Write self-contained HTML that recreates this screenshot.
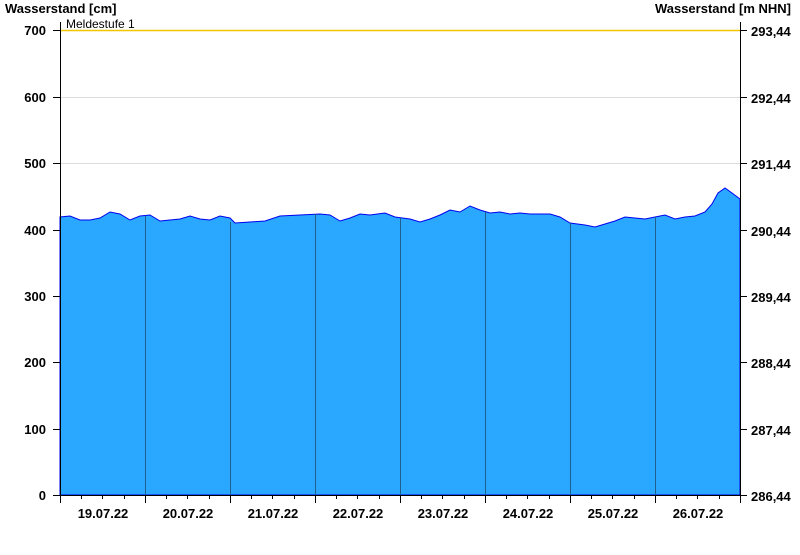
<!DOCTYPE html>
<html><head><meta charset="utf-8"><style>
body{margin:0;background:#fff;width:800px;height:550px;overflow:hidden}
svg text{font-family:"Liberation Sans",Arial,sans-serif;font-weight:bold;font-size:13px;fill:#000}
</style></head><body>
<svg width="800" height="550" xmlns="http://www.w3.org/2000/svg">
<g stroke="#dcdcdc" stroke-width="1">
<line x1="60" y1="97.5" x2="740" y2="97.5"/><line x1="60" y1="163.5" x2="740" y2="163.5"/>
<line x1="60" y1="230.5" x2="740" y2="230.5"/><line x1="60" y1="296.5" x2="740" y2="296.5"/>
<line x1="60" y1="362.5" x2="740" y2="362.5"/><line x1="60" y1="429.5" x2="740" y2="429.5"/>
</g>
<line x1="60" y1="30.5" x2="740" y2="30.5" stroke="#f5c400" stroke-width="1.5"/>
<polygon fill="#2aa8ff" stroke="#0000ee" stroke-width="1" points="60,495 60,217 70,216 80,220 90,220 100,218 110,212 120,214 130,220 140,216 150,215 160,221 170,220 180,219 190,216 200,219 210,220 220,216 230,218 235,223 250,222 265,221 280,216 300,215 320,214 330,215 340,221 350,218 360,214 370,215 385,213 395,217 410,219 420,222 430,219 440,215 450,210 460,212 470,206 480,210 490,213 500,212 510,214 520,213 530,214 550,214 560,217 570,223 585,225 595,227 605,224 615,221 625,217 635,218 645,219 655,217 665,215 675,219 685,217 695,216 705,212 712,204 718,193 725,188 732,193 740,199 740,495"/>
<rect x="60" y="200" width="681" height="296" fill="none"/>
<g stroke="#1f5f8f" stroke-width="1">
<line x1="145.5" y1="216" x2="145.5" y2="495"/><line x1="230.5" y1="222" x2="230.5" y2="495"/>
<line x1="315.5" y1="214" x2="315.5" y2="495"/><line x1="400.5" y1="218" x2="400.5" y2="495"/>
<line x1="485.5" y1="212" x2="485.5" y2="495"/><line x1="570.5" y1="223" x2="570.5" y2="495"/>
<line x1="655.5" y1="217" x2="655.5" y2="495"/>
</g>
<g stroke="#000" stroke-width="1">
<line x1="60.5" y1="22" x2="60.5" y2="495"/><line x1="740.5" y1="22" x2="740.5" y2="495"/>
<line x1="53" y1="495.5" x2="747" y2="495.5"/>
<line x1="53" y1="30.5" x2="60" y2="30.5"/><line x1="53" y1="97.5" x2="60" y2="97.5"/><line x1="53" y1="163.5" x2="60" y2="163.5"/><line x1="53" y1="230.5" x2="60" y2="230.5"/><line x1="53" y1="296.5" x2="60" y2="296.5"/><line x1="53" y1="362.5" x2="60" y2="362.5"/><line x1="53" y1="429.5" x2="60" y2="429.5"/>
<line x1="740" y1="30.5" x2="747" y2="30.5"/><line x1="740" y1="97.5" x2="747" y2="97.5"/><line x1="740" y1="163.5" x2="747" y2="163.5"/><line x1="740" y1="230.5" x2="747" y2="230.5"/><line x1="740" y1="296.5" x2="747" y2="296.5"/><line x1="740" y1="362.5" x2="747" y2="362.5"/><line x1="740" y1="429.5" x2="747" y2="429.5"/>
<path d="M60.5 495v8M145.5 495v8M230.5 495v8M315.5 495v8M400.5 495v8M485.5 495v8M570.5 495v8M655.5 495v8M740.5 495v8"/>
<path d="M81.5 495v4M102.5 495v4M124.5 495v4M166.5 495v4M187.5 495v4M209.5 495v4M251.5 495v4M272.5 495v4M294.5 495v4M336.5 495v4M357.5 495v4M379.5 495v4M421.5 495v4M442.5 495v4M464.5 495v4M506.5 495v4M527.5 495v4M549.5 495v4M591.5 495v4M612.5 495v4M634.5 495v4M676.5 495v4M697.5 495v4M719.5 495v4"/>
</g>
<text x="5" y="13">Wasserstand [cm]</text>
<text x="791" y="13" text-anchor="end">Wasserstand [m NHN]</text>
<text x="66" y="28" style="font-weight:normal;font-size:12px">Meldestufe 1</text>
<g text-anchor="end">
<text x="46" y="35">700</text><text x="46" y="102">600</text><text x="46" y="168">500</text><text x="46" y="235">400</text><text x="46" y="301">300</text><text x="46" y="367">200</text><text x="46" y="434">100</text><text x="46" y="500">0</text>
</g>
<g>
<text x="751" y="36">293,44</text><text x="751" y="103">292,44</text><text x="751" y="169">291,44</text><text x="751" y="236">290,44</text><text x="751" y="302">289,44</text><text x="751" y="368">288,44</text><text x="751" y="435">287,44</text><text x="751" y="501">286,44</text>
</g>
<g text-anchor="middle">
<text x="103" y="518">19.07.22</text><text x="188" y="518">20.07.22</text><text x="273" y="518">21.07.22</text><text x="358" y="518">22.07.22</text><text x="443" y="518">23.07.22</text><text x="528" y="518">24.07.22</text><text x="613" y="518">25.07.22</text><text x="698" y="518">26.07.22</text>
</g>
</svg>
</body></html>
